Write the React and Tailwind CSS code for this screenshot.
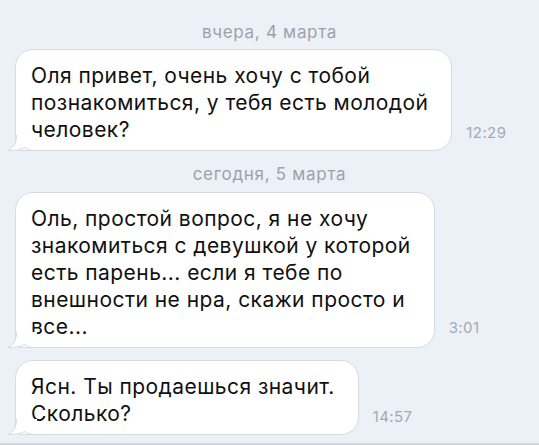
import React from "react";

function Tail() {
  return (
    <svg
      className="absolute left-[-9px] bottom-[-1px]"
      width="30"
      height="16"
      viewBox="0 0 30 16"
    >
      <path
        d="M9.5 0 C9.5 8 7 12.5 1 15.5 C8 15.6 14 14.6 18 12.5 C21 14.8 24 15.5 30 15.5 L30 0 Z"
        fill="#ffffff"
      />
      <path
        d="M9.5 0 C9.5 8 7 12.5 1 15.5 C8 15.6 14 14.6 18 12.5 C21 14.8 24 15.5 30 15.5"
        fill="none"
        stroke="#d6dbe2"
        strokeWidth="1"
      />
    </svg>
  );
}

function Message({ lines, time, timeMb = "mb-[11px]" }) {
  return (
    <div className="flex items-end ml-[15px]">
      <div className="relative bg-white border border-[#d6dbe2] rounded-[18px] rounded-bl-[6px] pl-[15px] pr-[23px] pt-[12px] pb-[7px] text-[21px] leading-[27px] tracking-[0.45px] text-[#111] whitespace-nowrap">
        {lines.map((l, i) => (
          <div key={i}>{l}</div>
        ))}
        <Tail />
      </div>
      <div className={`ml-[14px] ${timeMb} text-[15px] leading-[16px] tracking-[0.4px] text-[#a3aab3]`}>
        {time}
      </div>
    </div>
  );
}

function DateLabel({ children, className }) {
  return (
    <div className={`text-center text-[17px] leading-[20px] tracking-[0.7px] text-[#9ba2ab] ${className}`}>
      {children}
    </div>
  );
}

export default function App() {
  return (
    <div
      className="w-[539px] h-[445px] bg-[#ecf1f8] flex flex-col overflow-hidden"
      style={{ fontFamily: 'Inter, "Noto Sans", sans-serif' }}
    >
      <DateLabel className="pt-[22px]">вчера, 4 марта</DateLabel>
      <div className="mt-[7px]">
        <Message
          lines={[
            "Оля привет, очень хочу с тобой",
            "познакомиться, у тебя есть молодой",
            "человек?",
          ]}
          time="12:29"
          timeMb="mb-[10px]"
        />
      </div>
      <DateLabel className="mt-[13px]">сегодня, 5 марта</DateLabel>
      <div className="mt-[8px]">
        <Message
          lines={[
            "Оль, простой вопрос, я не хочу",
            "знакомиться с девушкой у которой",
            "есть парень... если я тебе по",
            "внешности не нра, скажи просто и",
            "все...",
          ]}
          time="3:01"
          timeMb="mb-[12px]"
        />
      </div>
      <div className="mt-[12px]">
        <Message
          lines={["Ясн. Ты продаешься значит.", "Сколько?"]}
          time="14:57"
          timeMb="mb-[10px]"
        />
      </div>
      <div className="mt-auto h-[2px] bg-[#d3d7dd]" />
    </div>
  );
}
